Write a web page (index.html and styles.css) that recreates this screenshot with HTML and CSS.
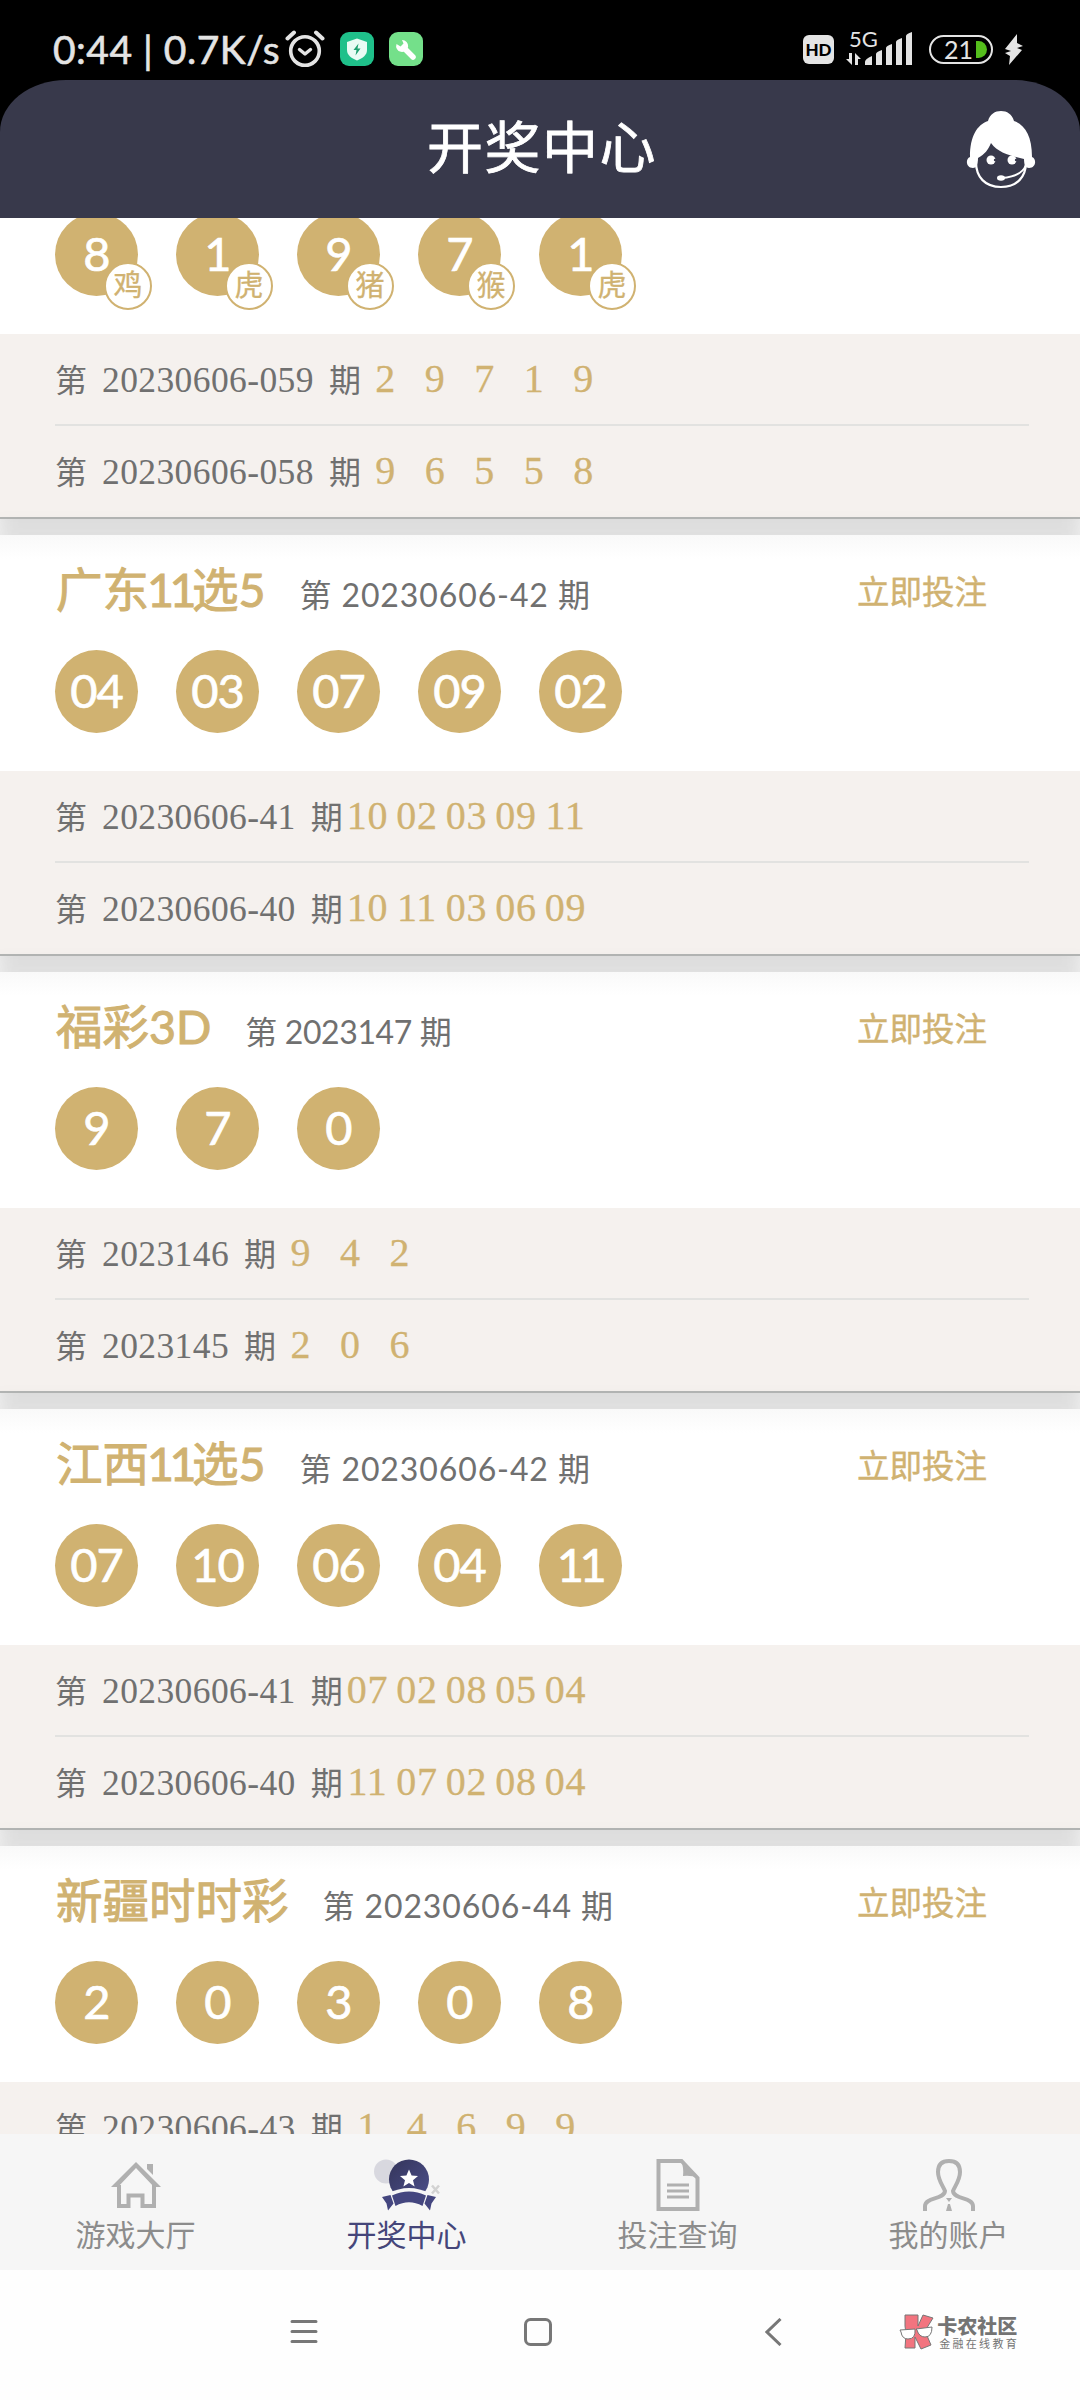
FILE: index.html
```html
<!DOCTYPE html>
<html lang="zh-CN">
<head>
    <meta charset="UTF-8">
    <meta name="viewport" content="width=device-width, initial-scale=1.0">
    <title>开奖中心</title>
    <link rel="stylesheet" href="styles.css">
</head>
<body>

    <div class="status-bar">
        <span class="status-time">0:44 | 0.7K/s</span>
        <svg class="icon-alarm" width="40" height="38" viewBox="0 0 40 38" fill="none" stroke="#e4e4e4" stroke-linecap="round" stroke-linejoin="round">
            <circle cx="20" cy="21" r="14.3" stroke-width="3.6"/>
            <path d="M14.5 19.5l5.5 4.5 5.5-4.5" stroke-width="3.4"/>
            <path d="M2.5 8.5L9 2.5M37.5 8.5L31 2.5" stroke-width="4"/>
        </svg>
        <svg class="icon-app" width="34" height="34" viewBox="0 0 34 34">
            <rect width="34" height="34" rx="9" fill="#1fc08a"/>
            <path d="M17 6.5l10 3.5v8c0 5-4 8-10 10.5C11 26 7 23 7 18v-8z" fill="#e9fbf4"/>
            <path d="M18.5 11.5l-5 6.5h3l-1 5.5 5-7h-3z" fill="#1fa070"/>
        </svg>
        <svg class="icon-app" width="34" height="34" viewBox="0 0 34 34">
            <rect width="34" height="34" rx="9" fill="#74e08a"/>
            <path d="M15 16L24 25" stroke="#fff" stroke-width="5.5" stroke-linecap="round"/>
            <path d="M13 8a6 6 0 1 1-5.5 4l4 2.5 3-3z" fill="#fff"/>
        </svg>
        <div class="status-right">
            <span class="hd">HD</span>
            <svg width="68" height="52" viewBox="0 -8 68 52">
                <text class="signal-text" x="3" y="16">5G</text>
                <g fill="#e4e4e4">
                    <path d="M3 22h3v12L0 28h3zM9 34V22l6 6h-3v6z"/>
                    <path d="M19 34v-3q0-3 7-6v9zM30 34V23q0-2 6-4v15zM40 34V17q0-2 6-4v21zM50 34V11q0-2 6-4v27zM60 34V5q0-2 6-4v33z"/>
                </g>
            </svg>
            <div class="battery">21<i class="battery-level"></i></div>
            <svg width="19" height="31" viewBox="0 0 19 31"><path d="M13 0L1 15l6 2-6 2 5 3-1 9L18 16l-5-2 6-2-6-3z" fill="#e4e4e4"/></svg>
        </div>
    </div>

    <header class="header">
        <h1>开奖中心</h1>
        <svg class="icon-service" width="70" height="80" viewBox="0 0 70 80">
            <path d="M22 11C24 4 29 1 35 1s11 3 13 10c11 4 18 15 18 36 5 2 4 11-3 11-3 0-5-3-5-9C45 46 32 43 25 33c-3 7-6 11-13 15 0 7-2 10-5 10-7 0-8-9-3-11C4 26 11 15 22 11z" fill="#fff"/>
            <path d="M10 52c0 15 9 25 25 25s25-10 25-25" fill="none" stroke="#fff" stroke-width="2.2"/>
            <path d="M60 55c-3 8-11 12-24 13" fill="none" stroke="#fff" stroke-width="2"/>
            <circle cx="25" cy="50" r="4.5" fill="#fff"/><circle cx="46" cy="50" r="4.5" fill="#fff"/>
            <circle cx="29" cy="50" r="1.2" fill="#38394b"/><circle cx="50" cy="50" r="1.2" fill="#38394b"/>
            <ellipse cx="35" cy="68" rx="4" ry="2.8" fill="#fff"/>
        </svg>
    </header>

    <main class="list">
        <section class="card card-first">
            <div class="draw">
                <div class="balls">
                    <div class="ball">8<span class="zodiac">鸡</span></div>
                    <div class="ball">1<span class="zodiac">虎</span></div>
                    <div class="ball">9<span class="zodiac">猪</span></div>
                    <div class="ball">7<span class="zodiac">猴</span></div>
                    <div class="ball">1<span class="zodiac">虎</span></div>
                </div>
            </div>
            <div class="history">
                <div class="row"><span class="issue">第<b>20230606-059</b>期</span><i>2</i><i>9</i><i>7</i><i>1</i><i>9</i></div>
                <div class="row"><span class="issue">第<b>20230606-058</b>期</span><i>9</i><i>6</i><i>5</i><i>5</i><i>8</i></div>
            </div>
        </section>

        <section class="card">
            <div class="draw">
                <div class="title">
                    <h2>广东<span class="eleven">11</span>选5</h2>
                    <span class="period">第 20230606-42 期</span>
                    <a class="bet">立即投注</a>
                </div>
                <div class="balls">
                    <div class="ball">04</div>
                    <div class="ball">03</div>
                    <div class="ball">07</div>
                    <div class="ball">09</div>
                    <div class="ball">02</div>
                </div>
            </div>
            <div class="history">
                <div class="row"><span class="issue">第<b>20230606-41</b>期</span><i>10</i><i>02</i><i>03</i><i>09</i><i>11</i></div>
                <div class="row"><span class="issue">第<b>20230606-40</b>期</span><i>10</i><i>11</i><i>03</i><i>06</i><i>09</i></div>
            </div>
        </section>

        <section class="card">
            <div class="draw">
                <div class="title">
                    <h2>福彩3D</h2>
                    <span class="period period-short">第 2023147 期</span>
                    <a class="bet">立即投注</a>
                </div>
                <div class="balls">
                    <div class="ball">9</div>
                    <div class="ball">7</div>
                    <div class="ball">0</div>
                </div>
            </div>
            <div class="history">
                <div class="row"><span class="issue">第<b>2023146</b>期</span><i>9</i><i>4</i><i>2</i></div>
                <div class="row"><span class="issue">第<b>2023145</b>期</span><i>2</i><i>0</i><i>6</i></div>
            </div>
        </section>

        <section class="card">
            <div class="draw">
                <div class="title">
                    <h2>江西<span class="eleven">11</span>选5</h2>
                    <span class="period">第 20230606-42 期</span>
                    <a class="bet">立即投注</a>
                </div>
                <div class="balls">
                    <div class="ball">07</div>
                    <div class="ball">10</div>
                    <div class="ball">06</div>
                    <div class="ball">04</div>
                    <div class="ball"><span class="eleven">11</span></div>
                </div>
            </div>
            <div class="history">
                <div class="row"><span class="issue">第<b>20230606-41</b>期</span><i>07</i><i>02</i><i>08</i><i>05</i><i>04</i></div>
                <div class="row"><span class="issue">第<b>20230606-40</b>期</span><i>11</i><i>07</i><i>02</i><i>08</i><i>04</i></div>
            </div>
        </section>

        <section class="card">
            <div class="draw">
                <div class="title">
                    <h2>新疆时时彩</h2>
                    <span class="period">第 20230606-44 期</span>
                    <a class="bet">立即投注</a>
                </div>
                <div class="balls">
                    <div class="ball">2</div>
                    <div class="ball">0</div>
                    <div class="ball">3</div>
                    <div class="ball">0</div>
                    <div class="ball">8</div>
                </div>
            </div>
            <div class="history">
                <div class="row"><span class="issue">第<b>20230606-43</b>期</span><i>1</i><i>4</i><i>6</i><i>9</i><i>9</i></div>
            </div>
        </section>
    </main>

    <nav class="tabs">
        <a class="tab">
            <svg width="52" height="54" viewBox="0 0 52 54" fill="none" stroke="#b0b0b0" stroke-width="4">
                <path d="M9 27v21h9.5V37.5h14V48H44V27"/>
                <path d="M1 29h7L26 10l18 19h7L26 4z" fill="#b0b0b0" stroke="none"/>
                <path d="M37 6h6v11l-6-6z" fill="#b0b0b0" stroke="none"/>
            </svg>
            游戏大厅
        </a>
        <a class="tab active">
            <svg width="66" height="54" viewBox="0 -1.5 66 54">
                <defs>
                    <linearGradient id="medal" x1="0" y1="0" x2="1" y2="1">
                        <stop offset="0" stop-color="#34355a"/>
                        <stop offset="1" stop-color="#4c4f8c"/>
                    </linearGradient>
                </defs>
                <circle cx="12" cy="12" r="12" fill="#d8d8df"/>
                <circle cx="35" cy="20" r="20" fill="url(#medal)"/>
                <path d="M35 10l2.6 6 6.4.5-5 4.2 1.6 6.3-5.6-3.4-5.6 3.4 1.6-6.3-5-4.2 6.4-.5z" fill="#fff"/>
                <path d="M14 34Q35 23 56 34L51 47H19z" fill="#f6f6f6"/>
                <path d="M18 36Q35 28 52 36L48.5 46.5Q35 39 21.5 46.5z" fill="#44467f"/>
                <path d="M8 37.5l8.5-2 3 8.5-5.5 7-1.5-7zM62 37.500l-8.5-2-3 8.500 5.500 7 1.500-7z" fill="#44467f"/>
                <path d="M58 26l7 8M65 26l-7 8" stroke="#d2d2d2" stroke-width="2.5"/>
            </svg>
            开奖中心
        </a>
        <a class="tab">
            <svg width="44" height="54" viewBox="0 0 44 54" fill="none" stroke="#b0b0b0" stroke-width="4">
                <path d="M2.500 3h23l16 17v31h-39z"/>
                <path d="M25 2q3 8 2 16 8-1 15 2z" fill="#b0b0b0" stroke="none"/>
                <path d="M11 27h22M11 33h22M11 39h22" stroke-width="3"/>
            </svg>
            投注查询
        </a>
        <a class="tab">
            <svg width="52" height="54" viewBox="0 0 52 54" fill="none" stroke="#b0b0b0" stroke-width="4">
                <path d="M2 53v-5c0-9 19-6 20-15C20 28 15 22 15 14 15 6 19 3 26 3s11 3 11 11c0 8-5 14-7 19 1 9 20 6 20 15v5"/>
                <path d="M23 40h6l-3 4zM25 46h2l2 7h-6z" fill="#b0b0b0" stroke="none"/>
            </svg>
            我的账户
        </a>
    </nav>

    <div class="system-bar">
        <svg class="sys-menu" width="28" height="28" viewBox="0 0 28 28" stroke="#777" stroke-width="3" stroke-linecap="round"><path d="M2 3.5h24M2 13.5h24M2 23.5h24"/></svg>
        <svg class="sys-home" width="28" height="28" viewBox="0 0 28 28" fill="none" stroke="#777" stroke-width="3"><rect x="1.5" y="1.5" width="25" height="25" rx="5"/></svg>
        <svg class="sys-back" width="17" height="28" viewBox="0 0 17 28" fill="none" stroke="#777" stroke-width="3"><path d="M15.5 1L2 14l13.5 13"/></svg>
        <div class="brand">
            <svg width="36" height="36" viewBox="0 0 36 36" stroke="#777">
                <path d="M6 1h13v11l5-11 10 3-8 13 6 14-10 4-6-12v11H6l1-14-1-8z" fill="#f2747f"/>
                <path d="M1 16l15-1q1 10-7 10-6 0-7-7zM17 15l16-2q0 10-7 10-6 0-8-7z" fill="#fff"/>
            </svg>
            <div>
                <div class="brand-name">卡农社区</div>
                <div class="brand-sub">金融在线教育</div>
            </div>
        </div>
    </div>

</body>
</html>
```
FILE: styles.css
```css
* {
    box-sizing: border-box;
}

body {
    margin: 0;
    width: 1080px;
    height: 2400px;
    display: flex;
    flex-direction: column;
    overflow: hidden;
    background-color: #000;
    font-family: Lato, "Noto Sans CJK SC", sans-serif;
}

svg {
    flex: none;
    display: block;
}

/* status bar */
.status-bar {
    height: 80px;
    flex: none;
    display: flex;
    align-items: center;
    padding: 18px 57px 0 53px;
    color: #e4e4e4;
}

.status-time {
    width: 232px;
    font-size: 39px;
    line-height: 40px;
    letter-spacing: 0.5px;
    white-space: nowrap;
    -webkit-text-stroke: 0.6px #e4e4e4;
}

.icon-app {
    margin-left: 15px;
}

.status-right {
    display: flex;
    align-items: center;
    margin-left: auto;
}

.hd {
    width: 31px;
    height: 29px;
    margin-right: 12px;
    border-radius: 6px;
    background-color: #e4e4e4;
    color: #000;
    font-size: 17px;
    font-weight: 900;
    line-height: 29px;
    text-align: center;
}

.signal-text {
    font-size: 22px;
    fill: #e4e4e4;
}

.battery {
    position: relative;
    width: 64px;
    height: 29px;
    margin: 0 11px 0 15px;
    padding-right: 5px;
    border: 2px solid #e4e4e4;
    border-radius: 15px;
    font-size: 25px;
    line-height: 25px;
    text-align: center;
}

.battery-level {
    position: absolute;
    top: 4px;
    right: 4px;
    width: 11px;
    height: 17px;
    border-radius: 0 9px 9px 0;
    background-color: #55be1c;
}

/* header */
.header {
    height: 138px;
    flex: none;
    display: flex;
    align-items: center;
    justify-content: center;
    position: relative;
    border-radius: 66px 66px 0 0 / 52px 52px 0 0;
    background-color: #38394b;
    color: #fff;
}

.header h1 {
    margin: 0;
    padding: 0 0 5px 4px;
    font-size: 56px;
    font-weight: 400;
    letter-spacing: 1.5px;
    line-height: 80px;
    -webkit-text-stroke: 0.8px #fff;
}

.icon-service {
    position: absolute;
    right: 44px;
    top: 30px;
}

/* draw list */
.list {
    height: 1916px;
    flex: none;
    overflow: hidden;
    background-color: #fff;
}

.card {
    height: 421px;
    margin-bottom: 16px;
    background-color: #fff;
    box-shadow: 0 6px 24px 6px rgba(0, 0, 0, 0.15);
}

.card-first {
    margin-top: -120px;
}

.draw {
    height: 236px;
    padding: 27px 55px 0;
    background: linear-gradient(#f9f9f9, #fff 24px);
}

.card-first .draw {
    padding-top: 115px;
}

.title {
    height: 60px;
    margin-bottom: 28px;
    padding-left: 1px;
    display: flex;
    align-items: baseline;
}

.title h2 {
    margin: 0;
    color: #d0b271;
    font-size: 46.5px;
    font-weight: 400;
    line-height: 55px;
    -webkit-text-stroke: 1px #d0b271;
}

.eleven {
    margin-left: -2px;
    letter-spacing: -4.5px;
}

.period {
    margin-left: 34px;
    color: #707070;
    font-size: 32px;
    letter-spacing: 0.9px;
}

.period-short {
    letter-spacing: -0.4px;
}

.bet {
    align-self: flex-start;
    margin-left: auto;
    margin-right: 38px;
    color: #d0b271;
    font-size: 32.5px;
    line-height: 60px;
    -webkit-text-stroke: 0.4px #d0b271;
}

.balls {
    display: flex;
    gap: 38px;
}

.ball {
    position: relative;
    width: 83px;
    height: 83px;
    border-radius: 50%;
    background-color: #d0b271;
    color: #fff;
    font-size: 47px;
    letter-spacing: -1px;
    line-height: 80px;
    text-align: center;
    -webkit-text-stroke: 0.7px #fff;
}

.zodiac {
    position: absolute;
    left: 49px;
    top: 49px;
    width: 48px;
    height: 48px;
    border: 2px solid #d0b271;
    border-radius: 50%;
    background-color: #fff;
    color: #d0b271;
    font-size: 29px;
    letter-spacing: 0;
    line-height: 42px;
    -webkit-text-stroke: 0.3px #d0b271;
}

.history {
    height: 185px;
    padding: 0 51px 0 55px;
    border-bottom: 2px solid #b4b6b5;
    background-color: #f5f1ee;
}

.row {
    height: 90px;
    display: flex;
    align-items: baseline;
    padding-top: 19px;
    font-family: "Liberation Serif", "Noto Sans CJK SC", serif;
    line-height: 52px;
}

.row + .row {
    border-top: 2px solid #e2e2e0;
}

.row i {
    width: 49.5px;
    color: #d0b271;
    font-size: 40px;
    font-style: normal;
    letter-spacing: 0.7px;
    text-align: center;
    -webkit-text-stroke: 0.3px #d0b271;
}

.issue {
    color: #707070;
    font-size: 32px;
}

.issue b {
    margin: 0 15px;
    font-size: 35.5px;
    font-weight: 400;
    letter-spacing: 0.4px;
}

/* bottom tabs */
.tabs {
    height: 136px;
    flex: none;
    display: flex;
    background-color: #f6f6f6;
}

.tab {
    width: 271px;
    flex: none;
    display: flex;
    flex-direction: column;
    align-items: center;
    padding-top: 24px;
    color: #8c8c8c;
    font-size: 30px;
    line-height: 44px;
}

.tab.active {
    color: #45467a;
}

/* system navigation */
.system-bar {
    height: 130px;
    flex: none;
    display: flex;
    align-items: center;
    padding: 0 61px 6px 290px;
    background-color: #fefefe;
}

.sys-home {
    margin-left: 206px;
}

.sys-back {
    margin-left: 213px;
}

.brand {
    display: flex;
    align-items: center;
    gap: 2px;
    margin-left: auto;
    color: #747474;
    white-space: nowrap;
}

.brand-name {
    font-size: 20px;
    font-weight: 900;
    line-height: 22px;
}

.brand-sub {
    padding-left: 2px;
    font-size: 11px;
    letter-spacing: 2.3px;
    line-height: 13px;
}
```
